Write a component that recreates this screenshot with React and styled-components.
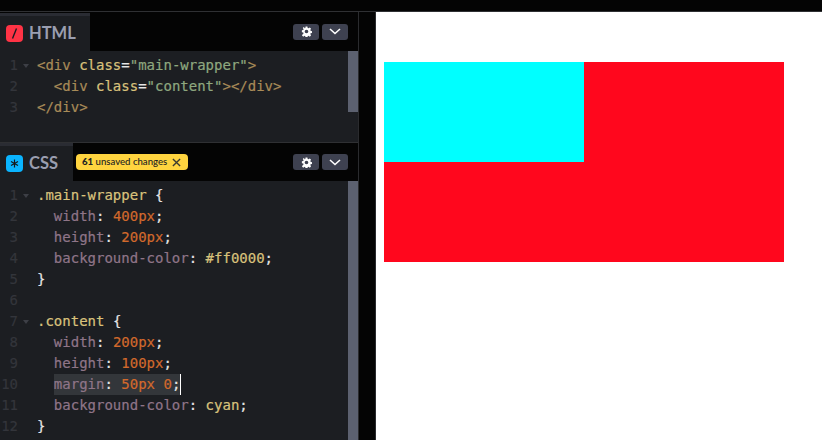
import React from "react";
import styled, { createGlobalStyle } from "styled-components";

const Global = createGlobalStyle`
  html, body { margin: 0; padding: 0; background: #040404; }
  #root { width: 822px; height: 440px; overflow: hidden; }
`;
const Page = styled.div`
  width: 822px; height: 440px; display: flex; flex-direction: column;
  background: #040404; overflow: hidden;
`;
const TopBar = styled.div`
  height: 11px; flex: none; background: #040404; border-bottom: 1px solid #2f3033;
`;
const Main = styled.div`flex: 1; display: flex; min-height: 0;`;
const Editors = styled.div`
  width: 358px; flex: none; display: flex; flex-direction: column;
  border-right: 1px solid #2a2b2e;
`;
const Gutter = styled.div`
  width: 16px; flex: none; background: #040404; border-right: 1px solid #2a2b2e;
`;
const Preview = styled.div`flex: 1; background: #fff; padding: 50px 8px;`;
const Outer = styled.div`width: 400px; height: 200px; background: #ff071d;`;
const Inner = styled.div`width: 200px; height: 100px; background: #00ffff;`;

const Panel = styled.section`
  display: flex; flex-direction: column;
  height: ${p => p.$h}px; flex: ${p => (p.$grow ? 1 : "none")}; min-height: 0;
  ${p => p.$divider && "border-top: 1px solid #2f3033;"}
`;
const Header = styled.header`
  height: ${p => p.$h}px; flex: none; display: flex; align-items: center; background: #040404;
`;
const Tab = styled.div`
  width: ${p => p.$w}px; height: 38px; box-sizing: border-box; flex: none; align-self: flex-end;
  display: flex; align-items: center; gap: 6px; padding: 0 0 0 6px;
  background: #1c1e22; border-top: 3px solid #2a2c33;
  font: 700 16.5px/1 Lato, sans-serif; color: #9a9eb0;
`;
const Logo = styled.span`
  width: 17px; height: 17px; border-radius: 4px; background: ${p => p.$c};
  display: flex; align-items: center; justify-content: center;
`;
const Badge = styled.div`
  margin-left: 3px; height: 16px; width: 112px; box-sizing: border-box; padding: 0 7px 0 6px;
  border-radius: 4px; background: #ffd43f;
  display: flex; align-items: center; justify-content: space-between; color: #222;
  font: 500 9.6px/16px Lato, sans-serif; white-space: nowrap;
  b { font-weight: 900; }
`;
const Actions = styled.div`margin-left: auto; margin-right: 10px; display: flex; gap: 3px;`;
const SmallButton = styled.button`
  width: 26px; height: 16px; padding: 0; border: 0; border-radius: 3px; background: #3e4150;
  display: flex; align-items: center; justify-content: center;
`;
const Body = styled.div`
  flex: 1; display: flex; min-height: 0; overflow: hidden; background: #1c1e22;
`;
const Code = styled.div`
  flex: 1; padding-top: 4px; min-width: 0;
  font: 14px/21px "DejaVu Sans Mono", monospace; color: #d6d6d6;
  -webkit-text-stroke: 0.2px;
`;
const Line = styled.div`display: flex; height: 21px;`;
const Num = styled.span`
  width: 18px; text-align: right; flex: none; color: #33353b;
`;
const Fold = styled.span`
  width: 19px; flex: none; display: flex; align-items: center; padding-left: 5px; box-sizing: border-box;
  &::before {
    content: ${p => (p.$open ? '""' : "none")};
    border-left: 3.5px solid transparent; border-right: 3.5px solid transparent;
    border-top: 4px solid #3d3f46;
  }
`;
const Content = styled.span`white-space: pre;`;
const Text = styled.span`
  color: ${p => p.$c || "#e6e6e6"};
`;
const Selected = styled.span`
  display: inline-block; background: #33363a; border-right: 1px solid #fff; height: 21px;
`;
const Scrollbar = styled.div`
  width: 10px; flex: none; background: transparent;
  &::before { content: ""; display: block; height: ${p => p.$h}px; background: #5c6170; }
`;

const TAG = "#a88b58", ATTR = "#d9c27c", STR = "#8ea77f", SEL = "#d9c27c", PROP = "#8f7588", NUM = "#d2692c";

const Gear = () => (
  <svg width="11" height="11" viewBox="0 0 24 24" fill="#fff">
    <path fillRule="evenodd" d="M10 1h4l.6 3.2 1.9.8 2.7-1.8 2.8 2.8-1.8 2.7.8 1.9 3 .6v4l-3 .6-.8 1.9 1.8 2.7-2.8 2.8-2.7-1.8-1.9.8-.6 3h-4l-.6-3-1.9-.8-2.7 1.8-2.8-2.8L5.7 16l-.8-1.9-3-.6v-4l3-.6.8-1.9-1.8-2.7 2.8-2.8L7.5 5l1.9-.8zM12 8a4 4 0 1 0 0 8 4 4 0 0 0 0-8z" />
  </svg>
);
const Chevron = () => (
  <svg width="12" height="7" viewBox="0 0 12 7" fill="none" stroke="#fff" strokeWidth="1.6">
    <path d="M1 1l5 4.5L11 1" />
  </svg>
);
const Controls = () => (
  <Actions>
    <SmallButton><Gear /></SmallButton>
    <SmallButton><Chevron /></SmallButton>
  </Actions>
);

const Row = ({ n, open, children }) => (
  <Line>
    <Num>{n}</Num>
    <Fold $open={open} />
    <Content>{children}</Content>
  </Line>
);

export default function App() {
  return (
    <Page>
      <Global />
      <TopBar />
      <Main>
        <Editors>
          <Panel $h={130}>
            <Header $h={39}>
              <Tab $w={90}>
                <Logo $c="#ff3345">
                  <svg width="11" height="13" viewBox="0 0 11 13"><path d="M7.5 1.5L3.5 11.5" stroke="#1a1a20" strokeWidth="1.4" /></svg>
                </Logo>
                HTML
              </Tab>
              <Controls />
            </Header>
            <Body>
              <Code>
                <Row n="1" open>
                  <Text $c={TAG}>&lt;div</Text> <Text $c={ATTR}>class</Text><Text>=</Text><Text $c={STR}>"main-wrapper"</Text><Text $c={TAG}>&gt;</Text>
                </Row>
                <Row n="2">
                  {"  "}<Text $c={TAG}>&lt;div</Text> <Text $c={ATTR}>class</Text><Text>=</Text><Text $c={STR}>"content"</Text><Text $c={TAG}>&gt;&lt;/div&gt;</Text>
                </Row>
                <Row n="3"><Text $c={TAG}>&lt;/div&gt;</Text></Row>
              </Code>
              <Scrollbar $h={61} />
            </Body>
          </Panel>
          <Panel $grow $divider>
            <Header $h={38}>
              <Tab $w={73}>
                <Logo $c="#0ab4ff">
                  <svg width="9" height="9" viewBox="0 0 9 9" stroke="#17181c" strokeWidth="1.2"><path d="M4.5 .5v8M1 2.5l7 4M8 2.5l-7 4" /></svg>
                </Logo>
                CSS
              </Tab>
              <Badge>
                <span><b>61</b> unsaved changes</span>
                <svg width="9" height="9" viewBox="0 0 10 10" stroke="#3a3a30" strokeWidth="1.5"><path d="M1 1l8 8M9 1l-8 8" /></svg>
              </Badge>
              <Controls />
            </Header>
            <Body>
              <Code>
                <Row n="1" open><Text $c={SEL}>.main-wrapper</Text> <Text>{"{"}</Text></Row>
                <Row n="2">{"  "}<Text $c={PROP}>width</Text><Text>:</Text> <Text $c={NUM}>400px</Text><Text>;</Text></Row>
                <Row n="3">{"  "}<Text $c={PROP}>height</Text><Text>:</Text> <Text $c={NUM}>200px</Text><Text>;</Text></Row>
                <Row n="4">{"  "}<Text $c={PROP}>background-color</Text><Text>:</Text> <Text $c={ATTR}>#ff0000</Text><Text>;</Text></Row>
                <Row n="5"><Text>{"}"}</Text></Row>
                <Row n="6" />
                <Row n="7" open><Text $c={SEL}>.content</Text> <Text>{"{"}</Text></Row>
                <Row n="8">{"  "}<Text $c={PROP}>width</Text><Text>:</Text> <Text $c={NUM}>200px</Text><Text>;</Text></Row>
                <Row n="9">{"  "}<Text $c={PROP}>height</Text><Text>:</Text> <Text $c={NUM}>100px</Text><Text>;</Text></Row>
                <Row n="10">{"  "}<Selected><Text $c={PROP}>margin</Text><Text>:</Text> <Text $c={NUM}>50px 0</Text><Text>;</Text></Selected></Row>
                <Row n="11">{"  "}<Text $c={PROP}>background-color</Text><Text>:</Text> <Text $c={ATTR}>cyan</Text><Text>;</Text></Row>
                <Row n="12"><Text>{"}"}</Text></Row>
              </Code>
              <Scrollbar $h={259} />
            </Body>
          </Panel>
        </Editors>
        <Gutter />
        <Preview>
          <Outer><Inner /></Outer>
        </Preview>
      </Main>
    </Page>
  );
}
